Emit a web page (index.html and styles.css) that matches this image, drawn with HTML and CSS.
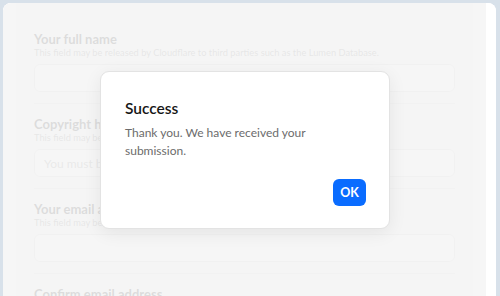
FILE: index.html
```html
<!DOCTYPE html>
<html lang="en">
<head>
<meta charset="utf-8">
<title>Success</title>
<link rel="stylesheet" href="styles.css">
</head>
<body>
<div class="frame">
  <div class="page">
    <form class="form">
      <div class="field">
        <label class="label">Your full name</label>
        <p class="desc">This field may be released by Cloudflare to third parties such as the Lumen Database.</p>
        <div class="input"></div>
      </div>
      <div class="field">
        <label class="label">Copyright holder's name</label>
        <p class="desc">This field may be released by Cloudflare to third parties such as the Lumen Database.</p>
        <div class="input"><span class="placeholder">You must be the copyright holder or authorized agent</span></div>
      </div>
      <div class="field">
        <label class="label">Your email address</label>
        <p class="desc">This field may be released by Cloudflare to third parties such as the Lumen Database.</p>
        <div class="input"></div>
      </div>
      <div class="field">
        <label class="label">Confirm email address</label>
      </div>
    </form>
    <div class="overlay"></div>
  </div>
  <div class="gutter"></div>
</div>
<div class="modal" role="dialog">
  <h2 class="modal-title">Success</h2>
  <p class="modal-text">Thank you. We have received your submission.</p>
  <div class="modal-actions"><button class="btn-ok" type="button">OK</button></div>
</div>
</body>
</html>
```

FILE: styles.css
```css
html, body {
  margin: 0;
  padding: 0;
}
body {
  width: 500px;
  height: 296px;
  overflow: hidden;
  background: #d8e1ea;
  font-family: "Segoe UI", Lato, "Noto Sans", sans-serif;
}
.frame {
  margin: 3px 4px 0 3px;
  height: 293px;
  background: #ffffff;
  border-radius: 8px 8px 0 0;
  display: flex;
  overflow: hidden;
}
.page {
  position: relative;
  flex: 1;
  background: #ffffff;
  padding: 0 13px;
}
.gutter {
  width: 10px;
  background: #ffffff;
}
.form {
  margin: 0;
  padding: 29px 18px 0 18px;
  background: #f8f8f8;
  height: 100%;
  box-sizing: border-box;
}
.field {
  padding-bottom: 11px;
  border-bottom: 1px solid #e2e2e2;
  margin-bottom: 13px;
}
.field:last-child {
  border-bottom: none;
}
.label {
  display: block;
  font-size: 13px;
  line-height: 14px;
  font-weight: 700;
  color: #4a4a4a;
}
.desc {
  margin: 0;
  font-size: 9.3px;
  line-height: 13px;
  color: #909090;
  white-space: nowrap;
}
.input {
  margin-top: 5px;
  height: 26px;
  border: 1px solid #dddddd;
  border-radius: 6px;
  background: #ffffff;
  display: flex;
  align-items: center;
  padding: 0 9px;
  overflow: hidden;
  white-space: nowrap;
}
.placeholder {
  font-size: 12px;
  color: #a0a0a0;
}
.overlay {
  position: absolute;
  inset: 0;
  background: rgba(244, 244, 244, 0.86);
}
.modal {
  position: absolute;
  left: 100px;
  top: 71px;
  width: 290px;
  height: 158px;
  box-sizing: border-box;
  padding: 26px 24px 0 24px;
  background: #ffffff;
  border: 1px solid #e3e3e3;
  border-radius: 9px;
  box-shadow: 0 4px 18px rgba(0, 0, 0, 0.07);
}
.modal-title {
  margin: 0;
  font-size: 15.5px;
  line-height: 20px;
  font-weight: 600;
  color: #161616;
}
.modal-text {
  margin: 6px 0 0 0;
  font-size: 12px;
  line-height: 18px;
  color: #6c6c6c;
}
.modal-actions {
  display: flex;
  justify-content: flex-end;
  margin-top: 19px;
}
.btn-ok {
  width: 33px;
  height: 27px;
  border: none;
  border-radius: 6px;
  background: #0a6cff;
  color: #ffffff;
  font-family: inherit;
  font-size: 12.5px;
  font-weight: 700;
  padding: 0;
  margin-right: -1px;
}
```
